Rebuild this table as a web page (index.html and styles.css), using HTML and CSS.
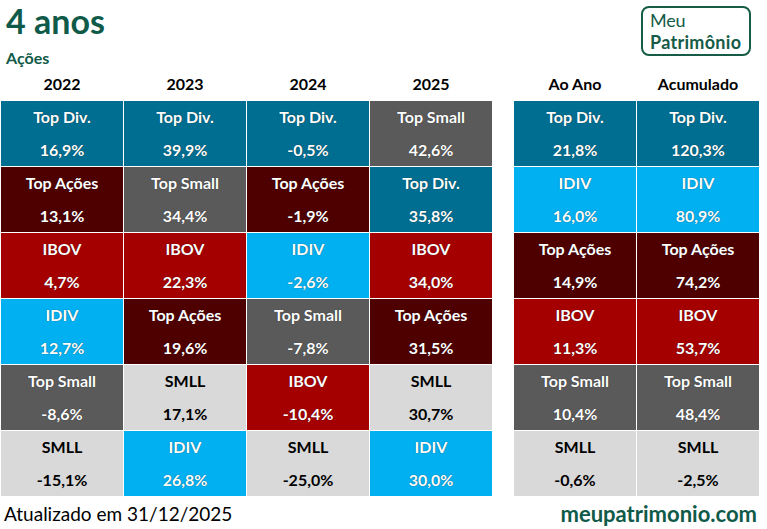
FILE: index.html
```html
<!DOCTYPE html>
<html lang="pt-BR">
<head>
<meta charset="utf-8">
<link rel="stylesheet" href="styles.css">
</head>
<body>
<div class="page">
  <header class="top">
    <div class="titles">
      <h1 class="title">4 anos</h1>
      <div class="subtitle">Ações</div>
    </div>
    <div class="logo">
      <span class="logo-meu">Meu</span>
      <span class="logo-pat">Patrimônio</span>
    </div>
  </header>

  <div class="grid">
    <div class="hd">2022</div><div class="hd">2023</div><div class="hd">2024</div><div class="hd">2025</div><div class="hd">Ao Ano</div><div class="hd">Acumulado</div>

    <div class="c div"><span>Top Div.</span><span>16,9%</span></div>
    <div class="c div"><span>Top Div.</span><span>39,9%</span></div>
    <div class="c div"><span>Top Div.</span><span>-0,5%</span></div>
    <div class="c small"><span>Top Small</span><span>42,6%</span></div>
    <div class="c div"><span>Top Div.</span><span>21,8%</span></div>
    <div class="c div"><span>Top Div.</span><span>120,3%</span></div>

    <div class="c acoes"><span>Top Ações</span><span>13,1%</span></div>
    <div class="c small"><span>Top Small</span><span>34,4%</span></div>
    <div class="c acoes"><span>Top Ações</span><span>-1,9%</span></div>
    <div class="c div"><span>Top Div.</span><span>35,8%</span></div>
    <div class="c idiv"><span>IDIV</span><span>16,0%</span></div>
    <div class="c idiv"><span>IDIV</span><span>80,9%</span></div>

    <div class="c ibov"><span>IBOV</span><span>4,7%</span></div>
    <div class="c ibov"><span>IBOV</span><span>22,3%</span></div>
    <div class="c idiv"><span>IDIV</span><span>-2,6%</span></div>
    <div class="c ibov"><span>IBOV</span><span>34,0%</span></div>
    <div class="c acoes"><span>Top Ações</span><span>14,9%</span></div>
    <div class="c acoes"><span>Top Ações</span><span>74,2%</span></div>

    <div class="c idiv"><span>IDIV</span><span>12,7%</span></div>
    <div class="c acoes"><span>Top Ações</span><span>19,6%</span></div>
    <div class="c small"><span>Top Small</span><span>-7,8%</span></div>
    <div class="c acoes"><span>Top Ações</span><span>31,5%</span></div>
    <div class="c ibov"><span>IBOV</span><span>11,3%</span></div>
    <div class="c ibov"><span>IBOV</span><span>53,7%</span></div>

    <div class="c small"><span>Top Small</span><span>-8,6%</span></div>
    <div class="c smll"><span>SMLL</span><span>17,1%</span></div>
    <div class="c ibov"><span>IBOV</span><span>-10,4%</span></div>
    <div class="c smll"><span>SMLL</span><span>30,7%</span></div>
    <div class="c small"><span>Top Small</span><span>10,4%</span></div>
    <div class="c small"><span>Top Small</span><span>48,4%</span></div>

    <div class="c smll"><span>SMLL</span><span>-15,1%</span></div>
    <div class="c idiv"><span>IDIV</span><span>26,8%</span></div>
    <div class="c smll"><span>SMLL</span><span>-25,0%</span></div>
    <div class="c idiv"><span>IDIV</span><span>30,0%</span></div>
    <div class="c smll"><span>SMLL</span><span>-0,6%</span></div>
    <div class="c smll"><span>SMLL</span><span>-2,5%</span></div>
  </div>

  <footer class="foot">
    <span class="updated">Atualizado em 31/12/2025</span>
    <span class="site">meupatrimonio.com</span>
  </footer>
</div>
</body>
</html>
```

FILE: styles.css
```css
* { box-sizing: border-box; }
html, body { margin: 0; padding: 0; background: #ffffff; }
body { font-family: Lato, "Liberation Sans", sans-serif; color: #000; }

.page { width: 767px; height: 529px; }

.top {
  display: flex;
  justify-content: space-between;
  align-items: flex-start;
  height: 72px;
}
.titles { padding-left: 6px; padding-top: 2px; }
.title {
  margin: 0;
  font-size: 34px;
  font-weight: 700;
  line-height: 38px;
  color: #0f5a48;
}
.subtitle {
  font-size: 16px;
  font-weight: 700;
  color: #0f5a48;
  line-height: 18px;
  margin-top: 9px;
}

.logo {
  margin-top: 6px;
  margin-right: 16px;
  width: 110px;
  height: 50px;
  border: 2px solid #155b46;
  border-radius: 8px;
  display: flex;
  flex-direction: column;
  justify-content: center;
  padding-left: 7px;
  color: #155b46;
}
.logo-meu { font-size: 18px; font-weight: 400; line-height: 22px; letter-spacing: -0.2px; }
.logo-pat { font-size: 18px; font-weight: 700; line-height: 22px; letter-spacing: 0.3px; }

.grid {
  display: grid;
  grid-template-columns: 122px 122px 122px 122px 143px 122px;
  grid-template-rows: 28px repeat(6, 65px);
  column-gap: 1px;
  row-gap: 1px;
  margin-left: 1px;
}
.grid > :nth-child(6n+5) { margin-left: 21px; }

.hd {
  font-size: 16px;
  font-weight: 700;
  text-align: center;
  line-height: 22px;
  padding-top: 1px;
}

.c {
  display: flex;
  flex-direction: column;
  align-items: center;
  justify-content: space-between;
  padding: 5px 0 6px;
  font-size: 16px;
  font-weight: 700;
  line-height: 21px;
  color: #fff;
  text-shadow: 0 0 1px rgba(0,0,0,0.6);
}
.div { background: #006e91; }
.acoes { background: #4e0000; }
.small { background: #5a5a5a; }
.ibov { background: #a40000; }
.idiv { background: #00b0f0; }
.smll { background: #d9d9d9; color: #000; text-shadow: none; }

.foot {
  display: flex;
  justify-content: space-between;
  align-items: center;
  padding: 4px 10px 0 4px;
}
.updated { font-size: 19px; color: #000; }
.site { font-size: 22px; font-weight: 700; color: #0f5a48; }
```
